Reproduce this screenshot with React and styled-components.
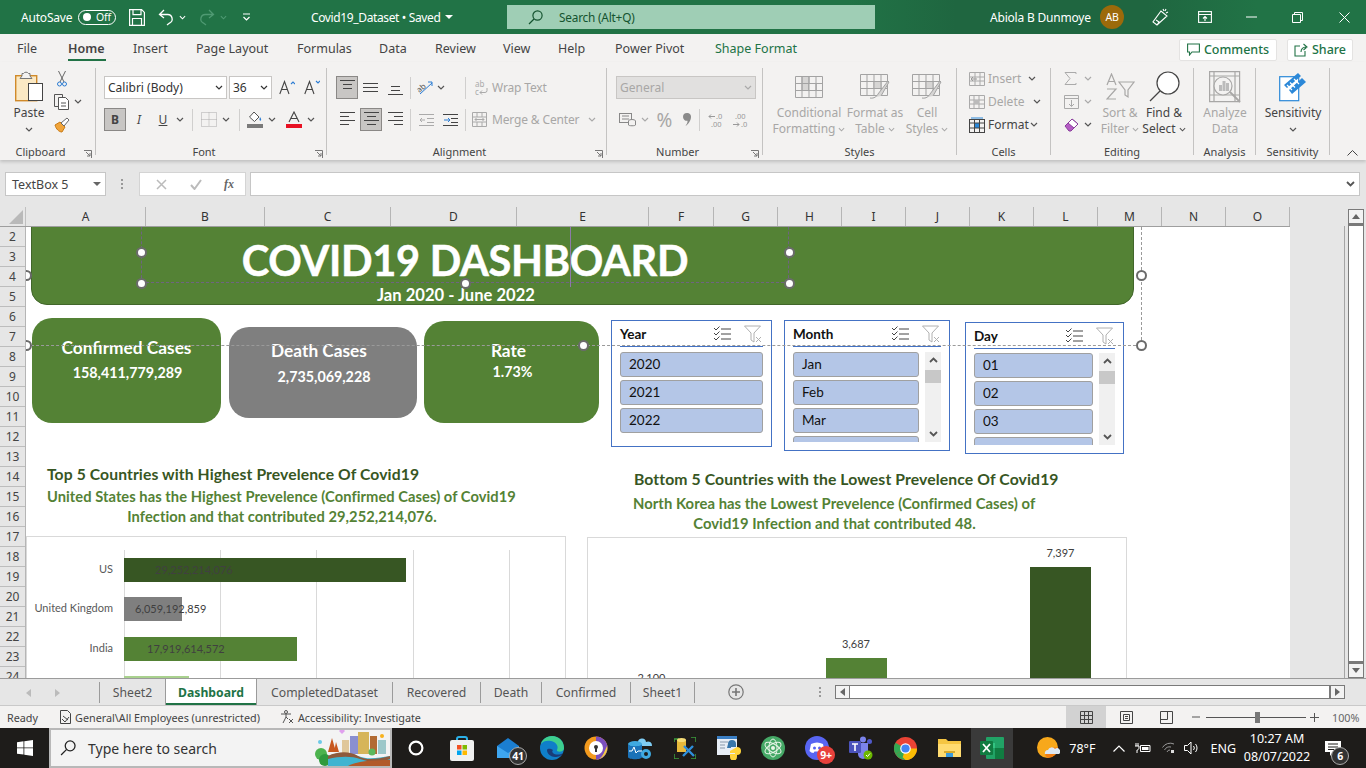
import React from "react";
import styled, { createGlobalStyle } from "styled-components";

const UI = `"Noto Sans", "Open Sans", "Liberation Sans", sans-serif`;
const CAL = `Lato, "Noto Sans", "Liberation Sans", sans-serif`;

const Global = createGlobalStyle`
  html, body { margin: 0; padding: 0; background: #e6e6e6; }
  body { font-family: ${UI}; overflow: hidden; }
  * { box-sizing: border-box; }
`;

const Page = styled.div`
  width: 1366px; height: 768px; display: flex; flex-direction: column; overflow: hidden;
  background: #e6e6e6; color: #444;
`;
const Svg = styled.svg`display: block; flex: none;`;

/* ----- title bar ----- */
const TitleBar = styled.header`
  height: 34px; flex: none; display: flex; align-items: center; padding-left: 21px; color: #fff;
  background: linear-gradient(90deg, #217346 0, #217346 62%, #1f6640 70%, #1f6640 84%, #217346 92%);
  font-size: 12px; letter-spacing: -.2px; white-space: nowrap;
`;
const Sp = styled.span`display: inline-flex; align-items: center; flex: none; margin-left: ${p => p.$ml || 0}px;`;
const FixedText = styled.span`width: ${p => p.$w}px; flex: none; margin-left: ${p => p.$ml || 0}px; letter-spacing: ${p => p.$ls ?? -0.2}px;`;
const Toggle = styled.span`
  width: 38px; height: 15px; border: 1px solid #fff; border-radius: 8px; display: flex; align-items: center;
  padding-left: 4px; gap: 5px; font-size: 10.5px; line-height: 1; flex: none;
  &::before { content: ""; width: 8px; height: 8px; border-radius: 50%; background: #fff; }
`;
const SearchBox = styled.div`
  margin-left: 54px; width: 368px; height: 24px; background: #9fceb5; color: #14532f; display: flex; align-items: center;
  padding-left: 21px; gap: 16px; font-size: 11.8px; flex: none;
`;
const Avatar = styled.span`
  margin-left: 10px; width: 24px; height: 24px; border-radius: 50%; background: #9c6a0b; display: flex; align-items: center; justify-content: center;
  font-size: 10.5px; color: #fff; flex: none;
`;

/* ----- tabs ----- */
const TabRow = styled.nav`
  height: 28px; flex: none; background: #f3f2f1; display: flex; align-items: center; padding-left: 17px; font-size: 12.5px; position: relative;
`;
const RTab = styled.span`
  width: ${p => p.$w}px; flex: none; white-space: nowrap; height: 28px; line-height: 30px; position: relative;
  color: ${p => (p.$shape ? "#217346" : "#444")};
  font-weight: ${p => (p.$active ? 600 : 400)};
  &::after { content: ""; display: ${p => (p.$active ? "block" : "none")}; position: absolute; left: 0; width: 38px; top: 25px; height: 2px; background: #217346; }
`;
const TabActions = styled.div`margin-left: auto; display: flex; gap: 10px; padding-right: 13px; padding-top: 3px;`;
const ActionBtn = styled.button`
  height: 22px; width: ${p => p.$w}px; background: #fff; border: 1px solid #e4e3e2; border-radius: 2px; display: flex; align-items: center; justify-content: center;
  gap: 4px; font: 500 12.5px ${UI}; color: #217346; padding: 0;
`;

/* ----- ribbon ----- */
const Ribbon = styled.section`
  height: 98px; flex: none; background: #f3f2f1; display: flex; padding-top: 6px; position: relative; box-shadow: 0 2px 3px rgba(0,0,0,.16);
`;
const Group = styled.div`
  width: ${p => p.$w}px; height: 87px; flex: none; display: flex; flex-direction: column; border-right: 1px solid #c4c3c2; position: relative;
`;
const GroupBody = styled.div`flex: 1; min-height: 0; display: flex; padding-left: ${p => p.$pl || 0}px;`;
const GroupLabel = styled.div`
  height: 14px; line-height: 14px; margin-bottom: -4px; padding-right: ${p => (p.$launch ? 14 : 0)}px; text-align: center; font-size: 11px; color: #444; white-space: nowrap;
`;
const Launcher = styled.span`position: absolute; right: 3px; bottom: -3px;`;
const Rows = styled.div`display: flex; flex-direction: column; gap: 9px; padding-top: 8px;`;
const Row = styled.div`display: flex; align-items: center; height: 23px;`;
const StackRows = styled.div`display: flex; flex-direction: column; margin-left: ${p => p.$ml || 0}px; margin-top: -1px;`;
const StackRow = styled.div`display: flex; align-items: center; height: 23px; font-size: 12px; color: ${p => (p.$dim ? "#a8a7a6" : "#444")}; white-space: nowrap;`;
const Slot = styled.span`
  width: ${p => p.$w}px; height: 23px; flex: none; display: inline-flex; align-items: center; justify-content: center; margin-left: ${p => p.$ml || 0}px;
  background: ${p => (p.$on ? "#c8c6c4" : "transparent")}; border: ${p => (p.$on ? "1px solid #8a8886" : "0")}; font-size: 12px;
`;
const VSep = styled.span`width: 1px; height: 22px; background: #d0cfce; flex: none; margin: 0 ${p => p.$r ?? p.$m ?? 0}px 0 ${p => p.$m || 0}px;`;
const Combo = styled.span`
  width: ${p => p.$w}px; height: 23px; flex: none; background: ${p => (p.$dim ? "#e1e0df" : "#fff")}; border: 1px solid #c8c6c4; display: flex; align-items: center; justify-content: space-between;
  padding: 0 3px 0 3px; font-size: 12px; color: ${p => (p.$dim ? "#a8a7a6" : "#333")}; margin-left: ${p => p.$ml || 0}px; white-space: nowrap;
`;
const DimText = styled.span`font-size: 12px; letter-spacing: -.15px; color: #a8a7a6; white-space: nowrap; margin-left: ${p => p.$ml || 0}px;`;
const PercentGlyph = styled.span`font-size: 19px; color: #a8a7a6;`;
const OrientBox = styled.span`display: flex; align-items: center; position: relative; width: 16px; height: 16px; flex: none;`;
const OrientText = styled.span`display: block; font-size: 8px; line-height: 9px; color: #555; transform: rotate(-40deg); transform-origin: 4px 6px;`;
const OrientArrow = styled.span`position: absolute; left: 1px; top: 1px;`;
const WrapBox = styled.span`display: flex; flex-direction: column; width: 14px; height: 16px; flex: none; font-size: 8px; line-height: 8px; color: #aaa;`;
const WrapLine = styled.span`display: flex; align-items: center; gap: 0;`;
const BigTool = styled.div`
  width: ${p => p.$w}px; flex: none; display: flex; flex-direction: column; align-items: center; margin-left: ${p => p.$ml || 0}px;
  color: ${p => (p.$dim ? "#a8a7a6" : "#444")}; font-size: 12px; line-height: 16px; text-align: center; white-space: nowrap;
`;
const BigIcon = styled.div`height: 37px; display: flex; align-items: center; justify-content: center; align-self: stretch;`;
const TextLine = styled.div`display: flex; align-items: center; justify-content: center; gap: 3px; height: 16px;`;
const Collapse = styled.span`position: absolute; right: 8px; bottom: 4px;`;

/* ----- formula ----- */
const FormulaArea = styled.div`height: 47px; flex: none; display: flex; padding: 12px 6px 0 5px; align-items: flex-start;`;
const NameBox = styled.div`
  width: 101px; height: 24px; background: #fff; border: 1px solid #c6c6c6; display: flex; align-items: center; justify-content: space-between; padding: 0 4px 0 6px; font-size: 12.5px; color: #444;
`;
const GripDots = styled.span`width: 33px; height: 24px; display: flex; align-items: center; justify-content: center;`;
const FxBox = styled.div`
  width: 107px; height: 24px; background: #fff; border: 1px solid #d4d4d4; display: flex; align-items: center; justify-content: space-between; padding: 0 11px 0 16px; color: #aaa;
`;
const FxText = styled.i`font: italic 700 12px "Liberation Serif", serif; color: #666;`;
const FormulaInput = styled.div`
  margin-left: 4px; flex: 1; height: 24px; background: #fff; border: 1px solid #c6c6c6; display: flex; align-items: center; justify-content: flex-end; padding-right: 4px;
`;

/* ----- sheet ----- */
const SheetArea = styled.div`height: 471px; flex: none; display: flex; position: relative;`;
const SheetMain = styled.div`width: 1290px; flex: none; display: flex; flex-direction: column;`;
const ColHeaders = styled.div`height: 20px; flex: none; display: flex; border-bottom: 1px solid #9e9e9e;`;
const Corner = styled.div`width: 26px; flex: none; display: flex; align-items: flex-end; padding: 0 0 2px 9px; border-right: 1px solid #c0c0c0;`;
const ColHead = styled.div`
  width: ${p => p.$w}px; flex: none; text-align: center; font-size: 12px; line-height: 20px; color: #333; border-right: 1px solid #b5b5b5;
`;
const SheetBody = styled.div`flex: 1; display: flex; min-height: 0;`;
const RowHeads = styled.div`width: 26px; flex: none; overflow: hidden; background: #e6e6e6; border-right: 1px solid #b5b5b5;`;
const RowHead = styled.div`height: 20px; text-align: center; font-size: 12px; line-height: 19px; color: #444; border-bottom: 1px solid #bdbdbd;`;
const Canvas = styled.div`flex: 1; position: relative; background: #fff; overflow: hidden; font-family: ${CAL};`;

const at = (x, y) => `left: ${x - 26}px; top: ${y - 227}px;`;
const Banner = styled.div`
  position: absolute; ${at(31, 217)} width: 1103px; height: 88px; background: #548235; border: 1px solid #41662a; border-radius: 0 0 16px 16px;
`;
const TitleBox = styled.div`
  position: absolute; ${at(141, 217)} width: 648px; height: 66px; border: 1px dashed #6e6480; display: flex; align-items: center; justify-content: center; padding-top: 22px;
  color: #fff; font-weight: 700; font-size: 41.5px; letter-spacing: -.3px; white-space: nowrap; line-height: 1; -webkit-text-stroke: .5px #fff;
`;
const TextSeam = styled.div`position: absolute; ${at(570, 227)} width: 1px; height: 60px; background: #8d7aa8;`;
const SubTitle = styled.div`
  position: absolute; ${at(356, 285)} width: 200px; text-align: center; color: #fff; font-weight: 700; font-size: 16.6px; line-height: 20px; white-space: nowrap;
`;
const Kpi = styled.div`
  position: absolute; left: ${p => p.$x - 26}px; top: ${p => p.$y - 227}px; width: ${p => p.$w}px; height: ${p => p.$h}px;
  background: ${p => p.$bg}; border-radius: 20px; color: #fff; text-align: center; font-weight: 700;
`;
const KpiTitle = styled.div`
  position: absolute; left: 0; right: 0; top: ${p => p.$t}px; transform: translateX(${p => p.$dx || 0}px); font-size: 17.3px; line-height: 22px; white-space: nowrap;
`;
const KpiValue = styled.div`
  position: absolute; left: 0; right: 0; top: ${p => p.$t}px; transform: translateX(${p => p.$dx || 0}px); font-size: 14.3px; line-height: 18px; white-space: nowrap;
`;
const DotH = styled.div`position: absolute; ${at(26, 345)} width: 1115px; border-top: 1px dashed #9a9a9a;`;
const DotV = styled.div`position: absolute; ${at(1141, 227)} height: 118px; border-left: 1px dashed #9a9a9a;`;
const Handle = styled.span`
  position: absolute; left: ${p => p.$x - 26 - 5.5}px; top: ${p => p.$y - 227 - 5.5}px; width: 11px; height: 11px; border-radius: 50%;
  background: #fff; border: 2px solid #6b6b6b;
`;

const Slicer = styled.div`
  position: absolute; left: ${p => p.$x - 26}px; top: ${p => p.$y - 227}px; width: ${p => p.$w}px; height: ${p => p.$h}px; background: #fff; border: 1px solid #4472c4;
  padding: 0 8px; font-family: ${CAL};
`;
const SlicerHead = styled.div`
  height: 26px; display: flex; align-items: center; border-bottom: 1px solid #4472c4; font-weight: 700; font-size: 13.5px; color: #111; padding-right: 1px;
`;
const SlicerName = styled.span`flex: 1;`;
const SlicerBody = styled.div`display: flex; gap: 6px; margin-top: ${p => p.$mt}px; height: ${p => p.$h}px; overflow: hidden;`;
const SlicerItems = styled.div`flex: 1; display: flex; flex-direction: column; gap: 3px; min-width: 0;`;
const SlicerItem = styled.div`
  height: 25px; flex: none; background: #b4c6e7; border: 1px solid #a0a0a0; border-radius: 3px; padding-left: 8px; font-size: 13.5px; line-height: 23px; color: #111;
`;
const SlicerBar = styled.div`
  width: 16px; flex: none; background: #f0f0f0; display: flex; flex-direction: column; align-items: center; justify-content: space-between; padding: 5px 0;
`;
const SlicerThumb = styled.div`position: absolute; width: 16px; height: 13px; background: #c8c8c8; margin-top: 13px;`;
const BarWrap = styled.div`position: relative; display: flex; flex-direction: column; align-items: center; justify-content: space-between; height: 100%; width: 100%;`;

const Heading = styled.div`
  position: absolute; left: ${p => p.$x - 26}px; top: ${p => p.$y - 227}px; width: ${p => p.$w}px; font-weight: 700; white-space: nowrap;
  font-size: ${p => p.$fs}px; letter-spacing: ${p => p.$ls || 0}px; color: ${p => p.$c}; line-height: 20px; text-align: ${p => p.$ta || "left"};
`;

const BarChart = styled.div`
  position: absolute; ${at(26, 536)} width: 540px; height: 180px; background: #fff; border: 1px solid #d9d9d9; padding: 21px 0 0 0; display: flex; flex-direction: column; gap: 15.4px;
`;
const GridLine = styled.span`position: absolute; left: ${p => p.$x - 27}px; top: 13px; bottom: 0; width: 1px; background: #d9d9d9;`;
const BarRow = styled.div`display: flex; align-items: center; height: 24px; position: relative;`;
const BarLabel = styled.span`width: 86px; text-align: right; font-size: 11px; color: #595959; white-space: nowrap; font-family: ${CAL}; margin: -3px 11px 0 0; flex: none;`;
const HBar = styled.div`height: 24px; background: ${p => p.$c}; display: flex; align-items: center; flex: none; position: relative; z-index: 1;`;
const HBarValue = styled.span`padding-left: ${p => p.$pl}px; margin-top: -1px; font-size: 11px; color: #404040; white-space: nowrap;`;

const ColChart = styled.div`
  position: absolute; ${at(587, 537)} width: 540px; height: 220px; background: #fff; border: 1px solid #d9d9d9; display: flex; align-items: flex-end; padding-left: 33px; gap: 143.5px;
`;
const ColItem = styled.div`width: 61px; display: flex; flex-direction: column; align-items: center; flex: none;`;
const ColValue = styled.span`font-size: 11px; color: #404040; line-height: 14px; margin-bottom: 7px; white-space: nowrap;`;
const ColBar = styled.div`width: 100%; background: ${p => p.$c};`;

const Gutter = styled.div`flex: 1; position: relative; background: #e6e6e6;`;
const GutterRule = styled.span`position: absolute; left: 54px; top: 19px; bottom: 0; width: 1px; background: #a5a5a5;`;
const VScroll = styled.div`position: absolute; left: 58px; top: 2px; bottom: 0; width: 16px; display: flex; flex-direction: column;`;
const VBtn = styled.div`height: 15px; flex: none; background: #f3f3f3; border: 1px solid #7a7a7a; display: flex; align-items: center; justify-content: center;`;
const VThumb = styled.div`flex: 1; background: #fff; border: 1px solid #7a7a7a; border-top: 2px solid #7a7a7a; border-bottom-width: 2px;`;

/* ----- sheet tabs ----- */
const TabBar = styled.div`
  height: 28px; flex: none; background: #e6e6e6; border-top: 1px solid #9b9b9b; border-bottom: 1px solid #c9c9c9; display: flex; align-items: stretch; font-size: 12.2px; color: #555; position: relative;
`;
const NavArrows = styled.div`width: 100px; flex: none; display: flex; align-items: center; padding-left: 26px; gap: 24px; border-right: 1px solid #9b9b9b; margin: 3px 0 2px;`;
const SheetTab = styled.div`
  width: ${p => p.$w}px; flex: none; display: flex; align-items: center; justify-content: center; white-space: nowrap;
  ${p => p.$active
    ? `background:#fff;color:#217346;font-weight:700;border:1px solid #9b9b9b;border-bottom:0;margin-top:-1px;box-shadow:inset 0 -2px 0 #217346;`
    : `margin:3px 0 2px;border-right:${p.$noline ? "0" : "1px solid #9b9b9b"};`}
`;
const AddSheet = styled.span`margin-left: 33px; display: flex; align-items: center;`;
const TabDots = styled.span`margin-left: 75px; display: flex; align-items: center;`;
const HScroll = styled.div`margin-left: 13px; display: flex; align-items: center; width: 510px;`;
const HBtn = styled.div`width: 15px; height: 14px; flex: none; background: #f3f3f3; border: 1px solid #7a7a7a; display: flex; align-items: center; justify-content: center;`;
const HThumb = styled.div`width: 480px; height: 14px; background: #fff; border: 1px solid #7a7a7a; border-left-width: 0;`;

/* ----- status ----- */
const StatusBar = styled.div`
  height: 22px; flex: none; background: #f3f2f1; display: flex; align-items: center; padding-left: 7px; font-size: 10.8px; color: #444; white-space: nowrap;
`;
const StatusItem = styled.span`display: flex; align-items: center; gap: 4px; margin-left: ${p => p.$ml || 0}px;`;
const ViewBtn = styled.span`width: 40px; height: 22px; display: flex; align-items: center; justify-content: center; background: ${p => (p.$on ? "#d2d2d2" : "transparent")}; flex: none;`;
const Zoom = styled.div`margin-left: auto; display: flex; align-items: center; height: 22px;`;
const ZoomTrack = styled.span`width: 100px; height: 1px; background: #555; position: relative; margin: 0 4px 0 6px; flex: none;
  &::after { content: ""; position: absolute; left: 49px; top: -5px; width: 5px; height: 11px; background: #777; }`;
const ZoomPct = styled.span`margin: 0 7px 0 13px; color: #666; width: 27px;`;

/* ----- taskbar ----- */
const Taskbar = styled.footer`height: 40px; flex: none; background: #1e1c1a; display: flex; align-items: center; color: #fff; position: relative;`;
const StartBtn = styled.div`width: 49px; height: 40px; display: flex; align-items: center; justify-content: center; flex: none;`;
const TaskSearch = styled.div`
  width: 343px; height: 40px; flex: none; background: #f3f3f3; border: 2px solid #b8b8b8; display: flex; align-items: center; padding-left: 9px; gap: 12px;
  color: #333; font-size: 14px; position: relative; overflow: hidden;
`;
const SearchArt = styled.span`position: absolute; right: 0; bottom: 0;`;
const Apps = styled.div`display: flex; margin-left: 2px;`;
const AppSlot = styled.div`
  width: ${p => p.$w || 44}px; height: 40px; flex: none; display: flex; align-items: center; justify-content: center; position: relative;
  background: ${p => (p.$on ? "#3a3a3a" : "transparent")};
`;
const Badge = styled.span`
  position: absolute; right: ${p => p.$r}px; bottom: ${p => p.$b}px; min-width: 18px; height: 18px; border-radius: 50%; background: ${p => p.$bg || "#333"}; border: ${p => (p.$bg ? "0" : "1px solid #aaa")};
  font-size: 10.5px; font-weight: 700; display: flex; align-items: center; justify-content: center; color: #fff; letter-spacing: -.3px;
`;
const Tray = styled.div`margin-left: auto; display: flex; align-items: center; height: 40px; font-size: 12.5px; padding-right: 25px;`;
const TrayItem = styled.span`margin-left: ${p => p.$ml || 0}px; display: flex; align-items: center; flex: none; position: relative;`;
const Clock = styled.div`width: 82px; text-align: center; font-size: 12.5px; line-height: 18px; flex: none;`;

/* ----- icons ----- */
const Chev = ({ c = "#555", w = 8, dim }) => (
  <Svg width={w} height="5" viewBox="0 0 8 5"><path d="M1 1l3 3 3-3" fill="none" stroke={dim ? "#aaa" : c} strokeWidth="1.2" /></Svg>
);
const Caret = ({ c = "#666" }) => <Svg width="8" height="4" viewBox="0 0 8 4"><path d="M0 0h8L4 4z" fill={c} /></Svg>;
const Launch = () => (
  <Svg width="8" height="8" viewBox="0 0 8 8"><path d="M0 .5h7.5V8M2 2l4 4M3 6h3V3" fill="none" stroke="#777" strokeWidth="1" /></Svg>
);
const SaveI = () => (
  <Svg width="16" height="17" viewBox="0 0 16 17" fill="none" stroke="#fff" strokeWidth="1.2"><path d="M.6.6h12l2.8 2.8v13H.6zM4 .6v5h8v-5M3.5 16.4V9.5h9v6.9" /></Svg>
);
const UndoI = ({ c = "#fff" }) => (
  <Svg width="16" height="17" viewBox="0 0 16 17" fill="none" stroke={c} strokeWidth="1.3"><path d="M6 1L1.5 5.5 6 9M2 5.5h7.5a4.5 4.5 0 0 1 2 8.6L9 16" /></Svg>
);
const RedoI = ({ c = "#4f9a73" }) => (
  <Svg width="16" height="17" viewBox="0 0 16 17" fill="none" stroke={c} strokeWidth="1.3"><path d="M10 1l4.5 4.5L10 9M14 5.5H6.5a4.5 4.5 0 0 0-2 8.6L7 16" /></Svg>
);
const CustomI = () => <Svg width="9" height="9" viewBox="0 0 9 9" fill="none" stroke="#fff" strokeWidth="1.2"><path d="M1 1h7M1.5 4l3 3 3-3" /></Svg>;
const SearchI = ({ c = "#14532f", s = 15 }) => <Svg width={s} height={s} viewBox="0 0 15 15" fill="none" stroke={c} strokeWidth="1.2"><circle cx="9.5" cy="5.5" r="4.6" /><path d="M6 9L1 14" /></Svg>;
const PenI = () => <Svg width="17" height="19" viewBox="0 0 17 19" fill="none" stroke="#fff" strokeWidth="1.1"><path d="M5 17L1 14 9 3l6 5zM5 17l2-3 -3-2M11 1l1 2M14 1l-1 2M16 4l-2 1" /></Svg>;
const RibbonModeI = () => <Svg width="14" height="12" viewBox="0 0 14 12" fill="none" stroke="#fff" strokeWidth="1.1"><rect x=".6" y=".6" width="12.8" height="10.8" /><path d="M.6 3.5h12.8M7 10V5.5M5 7.5l2-2 2 2" /></Svg>;
const WinMin = () => <Svg width="11" height="2" viewBox="0 0 11 2"><path d="M0 1h11" stroke="#fff" /></Svg>;
const WinMax = () => <Svg width="11" height="11" viewBox="0 0 11 11" fill="none" stroke="#fff"><path d="M.5 2.5h8v8h-8zM2.5 2.5v-2h8v8h-2" /></Svg>;
const WinX = () => <Svg width="11" height="11" viewBox="0 0 11 11" stroke="#fff"><path d="M.5.5l10 10M10.5.5l-10 10" /></Svg>;
const CommentI = () => <Svg width="13" height="13" viewBox="0 0 13 13" fill="none" stroke="#217346" strokeWidth="1.1"><path d="M.6 1h11.8v8H5L2.5 12V9H.6z" /></Svg>;
const ShareI = () => <Svg width="14" height="14" viewBox="0 0 14 14" fill="none" stroke="#217346" strokeWidth="1.1"><path d="M6 3H1v10h10V8M7 9c0-3 2-5 5-5M9.5 1L13 4l-3.5 3" /></Svg>;

const PasteI = () => (
  <Svg width="28" height="31" viewBox="0 0 28 31">
    <rect x=".7" y="4.7" width="21" height="25" fill="#fbe9c4" stroke="#d08a2a" strokeWidth="1.4" />
    <path d="M7 5V2.5h1.5a3 3 0 0 1 5 0H15V5l2 2.5H5z" fill="#f3f2f1" stroke="#777" />
    <rect x="13.5" y="12.5" width="14" height="17" fill="#fff" stroke="#444" />
  </Svg>
);
const ScissorsI = () => <Svg width="10" height="17" viewBox="0 0 10 17" fill="none"><path d="M1.5 1l5.5 11M8.5 1L3 12" stroke="#666" /><circle cx="2.5" cy="14" r="2" stroke="#2b7cd3" /><circle cx="7.5" cy="14" r="2" stroke="#2b7cd3" /></Svg>;
const CopyI = () => <Svg width="16" height="16" viewBox="0 0 16 16" fill="#fff" stroke="#555"><path d="M.5.5h8v12h-8z" fill="none" /><path d="M4.5 3.5h7l3 3v9h-10z" /><path d="M7 9h5M7 12h5" /></Svg>;
const BrushI = () => <Svg width="17" height="17" viewBox="0 0 17 17"><path d="M1 9l5-3 5 5-3 5c-3 0-6-3-7-7z" fill="#f0a43a" stroke="#c97a14" /><path d="M7 7l6-5 2 2-5 6z" fill="#fff" stroke="#666" /></Svg>;
const BigA = ({ up }) => (
  <Svg width="16" height="15" viewBox="0 0 16 15" fill="none" stroke="#444" strokeWidth="1.1">
    <path d="M.8 14L5.5 1.5 10 14M2.5 9.5h6" />
    <path d={up ? "M12 4l2-2 2 2" : "M12 1l2 2 2-2"} stroke="#2b7cd3" />
  </Svg>
);
const GridDots = () => <Svg width="16" height="15" viewBox="0 0 16 15" fill="none" stroke="#aaa" strokeDasharray="1 1"><path d="M.5.5h15v14H.5zM8 .5v14M.5 7.5h15" /></Svg>;
const FillI = () => <Svg width="16" height="17" viewBox="0 0 16 17"><path d="M7 1l5 5-4.5 4.5L2.5 6z" fill="#fff" stroke="#555" /><path d="M13 6c1 1.5 1.5 2.5 1 3.5-.8.5-1.8-.3-1.5-1.5z" fill="#2b7cd3" /><rect y="13" width="16" height="4" fill="#7a7a7a" /></Svg>;
const FontColI = () => <Svg width="16" height="17" viewBox="0 0 16 17" fill="none" stroke="#444" strokeWidth="1.1"><path d="M3 11l5-10 5 10M4.6 7.5h6.8" /><rect y="13" width="16" height="4" fill="#e81123" stroke="none" /></Svg>;
const AlignI = ({ t }) => {
  const paths = {
    vtop: "M0 .5h15M3 4.5h9M3 8.5h9",
    vmid: "M0 3.5h15M0 7.5h15M0 11.5h15",
    vbot: "M3 6.5h9M3 10.5h9M0 14.5h15",
    left: "M0 .5h15M0 4.5h9M0 8.5h15M0 12.5h9",
    center: "M0 .5h15M3 4.5h9M0 8.5h15M3 12.5h9",
    right: "M0 .5h15M6 4.5h9M0 8.5h15M6 12.5h9",
  };
  return <Svg width="15" height="15" viewBox="0 0 15 15" fill="none" stroke="#444"><path d={paths[t]} /></Svg>;
};
const OrientI = () => (
  <OrientBox>
    <OrientText>ab</OrientText>
    <OrientArrow><Svg width="15" height="14" viewBox="0 0 15 14" fill="none" stroke="#2b7cd3"><path d="M2 13L14 2M10 1h4v4" /></Svg></OrientArrow>
  </OrientBox>
);
const Outdent = ({ c, a }) => <Svg width="15" height="12" viewBox="0 0 15 12" fill="none" stroke={c}><path d="M0 .5h15M8 4.5h7M8 8.5h7M0 11.5h15" /><path d={a} stroke={a.includes("M1 6h6") ? "#2b7cd3" : "#aaa"} /></Svg>;
const WrapI = () => (
  <WrapBox>
    <WrapLine>ab</WrapLine>
    <WrapLine>c<Svg width="9" height="8" viewBox="0 0 9 8" fill="none" stroke="#aaa"><path d="M8 0v2.500a2 2 0 0 1-2 2H1M3 2.500L1 4.500l2 2" /></Svg></WrapLine>
  </WrapBox>
);
const MergeI = () => <Svg width="15" height="15" viewBox="0 0 15 15" fill="none" stroke="#aaa"><path d="M.5.5h14v14H.5zM.5 5h14M.5 10h14M5 .5V5M5 10v4.5M10 .5V5M10 10v4.5M3 7.5h9M4.500 6L3 7.5 4.500 9M10.500 6L12 7.5 10.500 9" /></Svg>;
const AcctI = () => <Svg width="17" height="14" viewBox="0 0 17 14" fill="none" stroke="#888"><rect x=".5" y=".5" width="12" height="9" /><path d="M3 3h7M3 6h7" /><ellipse cx="13" cy="8" rx="3.500" ry="1.500" fill="#f3f2f1" /><path d="M9.500 8v4c0 1 7 1 7 0V8" fill="#f3f2f1" /></Svg>;
const CommaI = () => <Svg width="8" height="13" viewBox="0 0 8 13"><path d="M4 0a3.800 3.800 0 0 1 4 4c0 3.500-2.500 7-5.500 9 1.500-2 2.200-3.500 2-5.200A3.900 3.900 0 0 1 0 4a4 4 0 0 1 4-4z" fill="#8a8a8a" /></Svg>;
const Decimal = ({ a, b, flip }) => (
  <Svg width="17" height="16" viewBox="0 0 17 16" fill="none" stroke="#999">
    <path d={flip ? "M1 12.500h6M5 10.500l2 2-2 2" : "M1 4.500h6M3 2.500l-2 2 2 2"} />
    <text x={flip ? 3 : 8} y="7" fontSize="7.500" fill="#999" stroke="none" fontFamily="Noto Sans">{a}</text>
    <text x={flip ? 9 : 3} y="15" fontSize="7.500" fill="#999" stroke="none" fontFamily="Noto Sans">{b}</text>
  </Svg>
);
const CondI = () => <Svg width="28" height="22" viewBox="0 0 28 22" fill="#d6d5d4" stroke="#a3a3a3"><path d="M.5.5h27v21H.5z" fill="none" /><path d="M7 .5h7v7H7zM7 7.5h7v7H7zM14 7.5h7v7h-7z" /><rect x="14" y="7.500" width="7" height="7" fill="#f3f2f1" /><path d="M.5 7.500h27M.5 14.500h27M7 .5v21M21 .5v21M14 .5v7M14 14.500v7" fill="none" /></Svg>;
const TableI = () => <Svg width="30" height="25" viewBox="0 0 30 25" fill="none" stroke="#a3a3a3"><path d="M.5.5h27v21H.5zM.5 7.500h27M.5 14.500h27M7 .5v21M14 .5v21M21 .5v21" /><path d="M14 7.500h7v7h-7z" fill="#d6d5d4" /><path d="M10 24c4 1 7-2 8-4l10-13 1 1-8 14" fill="#d6d5d4" stroke="#a3a3a3" /></Svg>;
const CellSideI = ({ k }) => {
  const p = {
    ins: "M.5 1.500h15v13H.5zM6 1.500v13M11 1.500v13M.5 6h15M.5 10h15",
    del: "M.5 1.500h15v13H.5zM5 1.500v13M10 1.500v13M.5 6h15M.5 10h15",
  }[k];
  return (
    <Svg width="16" height="16" viewBox="0 0 16 16" fill="none" stroke="#aaa">
      <path d={p} />
      {k === "ins" ? <path d="M8 8H2M4 6L2 8l2 2" stroke="#999" /> : <rect x="5" y="6" width="5" height="4" fill="#bbb" stroke="none" />}
    </Svg>
  );
};
const FormatI = () => <Svg width="16" height="16" viewBox="0 0 16 16"><rect x=".5" y="2.500" width="15" height="13" fill="none" stroke="#444" /><rect x="5.500" y="6" width="5" height="5" fill="#2b88d8" /><path d="M.5 6h15M.5 11h15M5.500 2.500v13M10.500 2.500v13" stroke="#444" /><path d="M2 1h12" stroke="#2b88d8" /></Svg>;
const SigmaI = () => <Svg width="13" height="13" viewBox="0 0 13 13" fill="none" stroke="#aaa"><path d="M12 2V.5H1l5 6-5 6h11V11" /></Svg>;
const FillDownI = () => <Svg width="15" height="14" viewBox="0 0 15 14" fill="none" stroke="#aaa"><path d="M.5.5h14v13H.5zM.5 3.500h14M7.500 5v6M5 9l2.500 2.500L10 9" /></Svg>;
const EraseI = () => <Svg width="15" height="15" viewBox="0 0 15 15"><path d="M1 9l7-7 6 5-7 7H5z" fill="#b55cc4" stroke="#8a3e9c" /><path d="M8 2l6 5-4 4-6-5z" fill="#fff" stroke="#8a3e9c" /></Svg>;
const SortI = () => <Svg width="29" height="27" viewBox="0 0 29 27" fill="none" stroke="#a8a7a6" strokeWidth="1.2"><path d="M1 12L5.500 1 10 12M2.500 8.500h6M1 16h9L1 26h9" /><path d="M13 9h15l-6 8v7l-3-2v-5z" /></Svg>;
const FindI = () => <Svg width="31" height="31" viewBox="0 0 31 31" fill="none" stroke="#444" strokeWidth="1.2"><circle cx="19" cy="12" r="11" fill="#fff" /><path d="M11 20L1 30" /></Svg>;
const AnalyzeI = () => (
  <Svg width="32" height="32" viewBox="0 0 32 32" fill="none" stroke="#a8a7a6" strokeWidth="1.2">
    <path d="M.6.6h30v30H.6zM.6 5h30M.6 24h30M5 .6v30M26 .6v30" />
    <circle cx="14" cy="15" r="9" fill="#f3f2f1" />
    <path d="M21 21l10 10" strokeWidth="1.8" />
    <rect x="10" y="14" width="3" height="6" fill="#bbb" stroke="none" /><rect x="13.500" y="10" width="3" height="10" fill="#bbb" stroke="none" /><rect x="17" y="12" width="3" height="8" fill="#bbb" stroke="none" />
  </Svg>
);
const SensI = () => (
  <Svg width="28" height="31" viewBox="0 0 28 31">
    <rect x=".7" y="5.700" width="19" height="24" fill="#fff" stroke="#2b88d8" strokeWidth="1.2" />
    <path d="M5 14L19 2l3 3-14 12zM10 19L23 7l4 4-14 12z" fill="#2b88d8" />
    <path d="M8 14l5 5M11 11.500l5 5M15 8l5 5" stroke="#fff" strokeWidth="1.2" />
  </Svg>
);
const TriangleCorner = () => <Svg width="14" height="14" viewBox="0 0 14 14"><path d="M14 0v14H0z" fill="#b9b9b9" /></Svg>;
const UpTri = ({ c = "#666" }) => <Svg width="8" height="5" viewBox="0 0 8 5"><path d="M4 0l4 5H0z" fill={c} /></Svg>;
const DownTri = ({ c = "#666" }) => <Svg width="8" height="5" viewBox="0 0 8 5"><path d="M0 0h8L4 5z" fill={c} /></Svg>;
const LeftTri = ({ c = "#666" }) => <Svg width="5" height="8" viewBox="0 0 5 8"><path d="M5 0v8L0 4z" fill={c} /></Svg>;
const RightTri = ({ c = "#666" }) => <Svg width="5" height="8" viewBox="0 0 5 8"><path d="M0 0v8l5-4z" fill={c} /></Svg>;
const MultiI = () => <Svg width="18" height="16" viewBox="0 0 18 16" fill="none" stroke="#444"><path d="M8 3h10M8 8h10M8 13h10" /><path d="M1 2l2 2 3.500-3.500M1 7l2 2 3.500-3.500M1 12l2 2 3.500-3.500" /></Svg>;
const ClearI = () => <Svg width="18" height="18" viewBox="0 0 18 18" fill="none" stroke="#b0b0b0"><path d="M.5 1h16L10 8v9l-3-2V8z" /><path d="M12 12l5 5M17 12l-5 5" /></Svg>;
const ChevUp = () => <Svg width="9" height="6" viewBox="0 0 9 6" fill="none" stroke="#555" strokeWidth="1.8"><path d="M1 5l3.500-3.500L8 5" /></Svg>;
const ChevDown = () => <Svg width="9" height="6" viewBox="0 0 9 6" fill="none" stroke="#555" strokeWidth="1.8"><path d="M1 1l3.500 3.500L8 1" /></Svg>;
const PlusCircle = () => <Svg width="16" height="16" viewBox="0 0 16 16" fill="none" stroke="#777" strokeWidth="1.2"><circle cx="8" cy="8" r="7.2" /><path d="M8 4v8M4 8h8" strokeWidth="1.6" /></Svg>;
const VDots = () => <Svg width="3" height="11" viewBox="0 0 3 11" fill="#999"><rect y="0" width="2" height="2" /><rect y="4" width="2" height="2" /><rect y="8" width="2" height="2" /></Svg>;
const DocTag = () => <Svg width="11" height="14" viewBox="0 0 11 14" fill="none" stroke="#444"><path d="M.5.5h7l3 3v10H.5z" /><path d="M2 9l3 3 4-5M3 6l5 4" /></Svg>;
const AccessI = () => <Svg width="14" height="14" viewBox="0 0 14 14" fill="none" stroke="#555"><circle cx="6" cy="2" r="1.500" /><path d="M1 4h10M6 4v3L3 13M6 7l2 2M9 9l4 4M13 9l-4 4" /></Svg>;
const NormalI = () => <Svg width="13" height="13" viewBox="0 0 13 13" fill="none" stroke="#444"><path d="M.5.5h12v12H.5zM4.500.5v12M8.500.5v12M.5 4.500h12M.5 8.500h12" /></Svg>;
const LayoutI = () => <Svg width="13" height="13" viewBox="0 0 13 13" fill="none" stroke="#444"><path d="M.5.5h12v12H.5zM3.500 3.500h6v6h-6zM5 5.500h3M5 7.500h3" /></Svg>;
const BreakI = () => <Svg width="13" height="13" viewBox="0 0 13 13" fill="none" stroke="#444"><path d="M.5.5h12v12H.5zM.5 8.500h7V.5" /></Svg>;

const WinLogo = () => <Svg width="16" height="16" viewBox="0 0 16 16" fill="#fff"><path d="M0 2.200L6.500 1.300v6.200H0zM7.300 1.200L16 0v7.500H7.300zM0 8.300h6.500v6.300L0 13.700zM7.300 8.300H16V16l-8.700-1.200z" /></Svg>;
const CityArt = () => (
  <Svg width="76" height="38" viewBox="0 0 76 38">
    <path d="M28 0l3 3-3 3-3-3z" fill="#e0a0ee" />
    <circle cx="6" cy="14" r="2" fill="#6cc9e8" />
    <circle cx="68" cy="8" r="2" fill="#f8b21d" />
    <path d="M14 24l4-14 4 14zM20 24l2-10 3 10z" fill="#c8571e" />
    <rect x="28" y="12" width="7" height="14" fill="#e0c79a" /><rect x="36" y="8" width="8" height="18" fill="#8a8fd0" /><rect x="44" y="4" width="11" height="22" fill="#d6b55a" /><rect x="56" y="8" width="7" height="18" fill="#b26b34" /><rect x="64" y="12" width="8" height="14" fill="#9cc7c9" />
    <circle cx="7" cy="26" r="6" fill="#4cb34e" /><circle cx="11" cy="32" r="6" fill="#2f9a3d" /><circle cx="58" cy="24" r="3.500" fill="#5cb85c" />
    <path d="M14 38V28c10-4 20-4 30 0s20 2 32 0v10z" fill="#3fb4d0" />
    <path d="M14 28c10-5 22-5 30 0s20 3 32 0v3c-10 4-22 3-30 0s-20-3-32 0z" fill="#8e5a3c" />
    <path d="M34 38c8-5 26-6 42-6v6z" fill="#b25a2a" />
  </Svg>
);
const CortanaI = () => <Svg width="16" height="16" viewBox="0 0 16 16" fill="none" stroke="#fff" strokeWidth="2.2"><circle cx="8" cy="8" r="6.4" /></Svg>;
const StoreI = () => (
  <Svg width="24" height="25" viewBox="0 0 24 25">
    <path d="M7 5V3a2 2 0 0 1 2-2h6a2 2 0 0 1 2 2v2" fill="none" stroke="#2bb0e8" strokeWidth="2" />
    <rect y="4" width="24" height="21" rx="2" fill="#f0f0f0" />
    <rect x="7" y="9" width="4.500" height="4.500" fill="#f25022" /><rect x="12.500" y="9" width="4.500" height="4.500" fill="#7fba00" /><rect x="7" y="14.500" width="4.500" height="4.500" fill="#00a4ef" /><rect x="12.500" y="14.500" width="4.500" height="4.500" fill="#ffb900" />
  </Svg>
);
const MailI = () => <Svg width="22" height="22" viewBox="0 0 22 22"><path d="M11 1l11 8v12H0V9z" fill="#1b7ed1" /><path d="M0 9l11 7 11-7v12H0z" fill="#3ea6f0" /></Svg>;
const EdgeI = () => (
  <Svg width="24" height="24" viewBox="0 0 24 24">
    <circle cx="12" cy="12" r="12" fill="#0f7fc9" /><path d="M24 12c0-7-5-12-12-12C6 0 2 4 1 8c2-3 6-4 10-3 5 1 8 5 6 9-1 2 7 3 7-2z" fill="#3ecf8e" />
    <path d="M7 14c0 4 4 7 8 7 3 0 7-1 8-4-3 2-8 2-10 0-1-1-1-2 0-3-2-1-5-2-6 0z" fill="#1a3c78" />
  </Svg>
);
const VpnI = () => <Svg width="24" height="24" viewBox="0 0 24 24"><circle cx="12" cy="12" r="11.500" fill="#f39a1d" /><path d="M12 .5A11.500 11.500 0 0 1 23.500 12 11.500 11.500 0 0 1 12 23.500z" fill="#7b4fbe" /><path d="M23 10a11.500 11.500 0 0 1-11 13.500c6 0 8-7 11-13.500z" fill="#f4d03f" /><circle cx="12" cy="12" r="7" fill="#fff" /><circle cx="12" cy="11" r="2" fill="#333" /><path d="M11 12h2v4h-2z" fill="#333" /></Svg>;
const AzureI = () => (
  <Svg width="25" height="24" viewBox="0 0 25 24">
    <path d="M10 7a4 4 0 0 1 8-1 4 4 0 0 1 6 4H10z" fill="#7fcdf5" />
    <ellipse cx="7" cy="8" rx="7" ry="3" fill="#3fa9e0" /><path d="M0 8v13c0 3 14 3 14 0V8c0 3-14 3-14 0z" fill="#1a72b8" />
    <path d="M1 15h3l2-4 2 6 2-2h4" fill="none" stroke="#fff" />
    <circle cx="18" cy="18" r="5" fill="#3fa9e0" /><circle cx="18" cy="18" r="2" fill="#1e1c1a" />
  </Svg>
);
const ToolI = () => (
  <Svg width="22" height="22" viewBox="0 0 22 22">
    <path d="M0 5v-3h5M17 0h5v5M22 17v5h-5M5 22H0v-5" fill="none" stroke="#3c9e3c" strokeWidth="1.5" />
    <path d="M3 3h9v12H3z" fill="#e8b93a" /><ellipse cx="7.500" cy="3" rx="4.500" ry="2" fill="#f6dc77" />
    <path d="M9 19l10-10M10 9l10 10" stroke="#2f8fdc" strokeWidth="2.4" />
  </Svg>
);
const PyI = () => (
  <Svg width="24" height="24" viewBox="0 0 24 24">
    <rect width="20" height="19" fill="#e8eef6" /><rect width="20" height="3" fill="#3b7fc4" />
    <path d="M3 6h8M3 9h5M3 12h5" stroke="#8898aa" />
    <path d="M11 8a4 4 0 0 1 8 0v3h-5v1h-4" fill="#3776ab" />
    <path d="M20 11a4 4 0 0 1 0 8v2a3 3 0 0 1-7 0v-3h5v-1h-5v-2z" fill="#ffd43b" />
  </Svg>
);
const AtomI = () => (
  <Svg width="24" height="24" viewBox="0 0 24 24"><circle cx="12" cy="12" r="12" fill="#45a866" /><circle cx="12" cy="12" r="2" fill="#e8f5e8" />
    <g fill="none" stroke="#e8f5e8" strokeWidth="1"><ellipse cx="12" cy="12" rx="4" ry="9" /><ellipse cx="12" cy="12" rx="4" ry="9" transform="rotate(60 12 12)" /><ellipse cx="12" cy="12" rx="4" ry="9" transform="rotate(120 12 12)" /></g></Svg>
);
const DiscordI = () => (
  <Svg width="24" height="24" viewBox="0 0 24 24"><circle cx="12" cy="12" r="12" fill="#5865f2" /><path d="M6 8c4-2 8-2 12 0l1.500 7c-1 1-2.500 2-4 2l-1-1.500h-5L8.500 17c-1.500 0-3-1-4-2z" fill="#fff" /><circle cx="9.500" cy="12" r="1.500" fill="#5865f2" /><circle cx="14.500" cy="12" r="1.500" fill="#5865f2" /></Svg>
);
const TeamsI = () => (
  <Svg width="24" height="24" viewBox="0 0 24 24"><circle cx="14" cy="3.500" r="3" fill="#7b83eb" /><circle cx="20.500" cy="5.500" r="2.500" fill="#5059c9" /><path d="M9 7h10v11a5 5 0 0 1-10 0z" fill="#7b83eb" /><rect y="5" width="12" height="12" rx="1" fill="#4b53bc" /><path d="M3 8h6M6 8v7" stroke="#fff" strokeWidth="1.600" /><circle cx="19" cy="19" r="4.500" fill="#6bb700" /><path d="M17 19l1.500 1.500 2.500-3" stroke="#fff" fill="none" /></Svg>
);
const ChromeI = () => (
  <Svg width="23" height="23" viewBox="0 0 24 24"><circle cx="12" cy="12" r="12" fill="#ea4335" /><path d="M12 12L1.600 18A12 12 0 0 1 1.600 6z" fill="#34a853" /><path d="M12 12l-10.400 6A12 12 0 0 0 22 18.500z" fill="#34a853" /><path d="M12 12h12a12 12 0 0 1-12 12l-3-3z" fill="#fbbc04" /><circle cx="12" cy="12" r="5.500" fill="#fff" /><circle cx="12" cy="12" r="4.300" fill="#4285f4" /></Svg>
);
const FolderI = () => <Svg width="23" height="20" viewBox="0 0 23 20"><path d="M0 1h8l2 2h13v16H0z" fill="#f5c542" /><path d="M0 6h23v13H0z" fill="#ffdb70" /><path d="M8 19v-6h7v6z" fill="#3a9bdc" /><path d="M6 13h11v2H6z" fill="#d6a92a" /></Svg>;
const ExcelI = () => (
  <Svg width="24" height="22" viewBox="0 0 24 22"><rect x="6" width="18" height="22" rx="1" fill="#21a366" /><rect x="15" y="11" width="9" height="11" fill="#107c41" /><rect x="6" y="6" width="9" height="5" fill="#33c481" /><rect y="4" width="13" height="14" rx="1" fill="#107c41" /><path d="M3 7l7 8M10 7l-7 8" stroke="#fff" strokeWidth="1.800" /></Svg>
);
const WeatherI = () => <Svg width="23" height="23" viewBox="0 0 23 23"><circle cx="10.500" cy="10.500" r="10.500" fill="#f7a81b" /><path d="M10.500 21A10.500 10.500 0 0 0 21 10.500h-6L8 18z" fill="#ee7c14" /><path d="M8 17a3 3 0 0 1 3-4 4 4 0 0 1 7-1 3 3 0 0 1 4 5z" fill="#dbe7f3" /></Svg>;
const TrayChev = () => <Svg width="12" height="7" viewBox="0 0 12 7" fill="none" stroke="#fff" strokeWidth="1.200"><path d="M.5 6.500L6 1l5.500 5.500" /></Svg>;
const BattI = () => <Svg width="16" height="12" viewBox="0 0 16 12" fill="none" stroke="#fff"><path d="M5.500 3.500H15v6H5.500z" /><rect x="7" y="5" width="6.500" height="3" fill="#fff" stroke="none" /><path d="M1 1v3M3 1v3M0 4h4v2c0 1-1 2-2 2v3" /></Svg>;
const WifiI = () => <Svg width="13" height="12" viewBox="0 0 13 12" fill="none" stroke="#999"><path d="M.5 5.500A9 9 0 0 1 12 2M2.500 8A6 6 0 0 1 9 5M5 10a3 3 0 0 1 3-2" /><rect x="9" y="8" width="3" height="3" fill="#ddd" stroke="none" /></Svg>;
const SoundI = () => <Svg width="15" height="14" viewBox="0 0 15 14" fill="none" stroke="#fff"><path d="M.5 4.500h3L7 1v12L3.500 9.500h-3zM9.500 5a3 3 0 0 1 0 4M11.500 3a6 6 0 0 1 0 8" /></Svg>;
const NotifI = () => <Svg width="16" height="15" viewBox="0 0 16 15" fill="#fff"><path d="M0 0h16v11H8l-3 4v-4H0z" /><path d="M3 3h10M3 6h10M3 8.500h6" stroke="#1e1c1a" /></Svg>;

const cols = [["A",120],["B",119],["C",126],["D",126],["E",132],["F",65],["G",64],["H",64],["I",64],["J",64],["K",64],["L",64],["M",64],["N",64],["O",64]];
const rows = Array.from({ length: 23 }, (_, i) => i + 2);
const tabsTop = [["File",51],["Home",65,1],["Insert",63],["Page Layout",101],["Formulas",82],["Data",56],["Review",68],["View",55],["Help",57],["Power Pivot",100]];
const hbars = [
  { label: "US", w: 282, c: "#375623", value: "29,252,214,076", pl: 31 },
  { label: "United Kingdom", w: 58, c: "#7f7f7f", value: "6,059,192,859", pl: 11 },
  { label: "India", w: 173, c: "#548235", value: "17,919,614,572", pl: 23 },
  { label: "", w: 65, c: "#a9d18e", value: "", pl: 0 },
];
const PX = 0.02453;
const columns = [
  { v: "2,100", n: 2300, c: "#a9d18e" },
  { v: "3,687", n: 3687, c: "#548235" },
  { v: "7,397", n: 7397, c: "#375623" },
];

function SlicerBox({ x, y, w, h, name, items, bodyH, mt, scroll }) {
  return (
    <Slicer $x={x} $y={y} $w={w} $h={h}>
      <SlicerHead>
        <SlicerName>{name}</SlicerName>
        <MultiI /><Sp $ml={13}><ClearI /></Sp>
      </SlicerHead>
      <SlicerBody $h={bodyH} $mt={mt}>
        <SlicerItems>{items.map((t, i) => <SlicerItem key={i}>{t}</SlicerItem>)}</SlicerItems>
        {scroll && (
          <SlicerBar>
            <BarWrap><ChevUp /><SlicerThumb /><ChevDown /></BarWrap>
          </SlicerBar>
        )}
      </SlicerBody>
    </Slicer>
  );
}

export default function App() {
  return (
    <Page>
      <Global />
      <TitleBar>
        <FixedText $w={57}>AutoSave</FixedText>
        <Toggle>Off</Toggle>
        <Sp $ml={13}><SaveI /></Sp>
        <Sp $ml={13}><UndoI /></Sp><Sp $ml={5}><Chev c="#fff" w={7} /></Sp>
        <Sp $ml={13}><RedoI /></Sp><Sp $ml={5}><Chev c="#4f9a73" w={7} /></Sp>
        <Sp $ml={15}><CustomI /></Sp>
        <FixedText $w={134} $ml={60} $ls={-0.37}>Covid19_Dataset • Saved</FixedText>
        <Sp><Caret c="#fff" /></Sp>
        <SearchBox><SearchI /><span>Search (Alt+Q)</span></SearchBox>
        <FixedText $w={100} $ml={115}>Abiola B Dunmoye</FixedText>
        <Avatar>AB</Avatar>
        <Sp $ml={28}><PenI /></Sp>
        <Sp $ml={29}><RibbonModeI /></Sp>
        <Sp $ml={34}><WinMin /></Sp>
        <Sp $ml={35}><WinMax /></Sp>
        <Sp $ml={36}><WinX /></Sp>
      </TitleBar>

      <TabRow>
        {tabsTop.map(([t, w, a]) => <RTab key={t} $w={w} $active={a}>{t}</RTab>)}
        <RTab $w={90} $shape>Shape Format</RTab>
        <TabActions>
          <ActionBtn $w={98}><CommentI />Comments</ActionBtn>
          <ActionBtn $w={66}><ShareI />Share</ActionBtn>
        </TabActions>
      </TabRow>

      <Ribbon>
        <Group $w={96}>
          <GroupBody>
            <BigTool $w={42} $ml={8}>
              <BigIcon><PasteI /></BigIcon>
              <TextLine>Paste</TextLine>
              <TextLine><Chev /></TextLine>
            </BigTool>
            <StackRows $ml={3}>
              <StackRow><Slot $w={18}><ScissorsI /></Slot></StackRow>
              <StackRow><Slot $w={18}><CopyI /></Slot><Slot $w={14}><Chev /></Slot></StackRow>
              <StackRow><Slot $w={18}><BrushI /></Slot></StackRow>
            </StackRows>
          </GroupBody>
          <GroupLabel $launch>Clipboard</GroupLabel>
          <Launcher><Launch /></Launcher>
        </Group>

        <Group $w={231}>
          <GroupBody $pl={8}>
            <Rows>
              <Row>
                <Combo $w={123}>Calibri (Body)<Chev c="#333" /></Combo>
                <Combo $w={43} $ml={2}>36<Chev c="#333" /></Combo>
                <Slot $w={20} $ml={5}><BigA up /></Slot>
                <Slot $w={20} $ml={5}><BigA /></Slot>
              </Row>
              <Row>
                <Slot $w={22} $on><b>B</b></Slot>
                <Slot $w={22} $ml={2}><i>I</i></Slot>
                <Slot $w={22} $ml={2}><u>U</u></Slot>
                <Slot $w={12}><Chev /></Slot>
                <VSep $m={6} />
                <Slot $w={19}><GridDots /></Slot>
                <Slot $w={16}><Chev /></Slot>
                <VSep $m={5} />
                <Slot $w={20}><FillI /></Slot>
                <Slot $w={14}><Chev /></Slot>
                <Slot $w={20} $ml={5}><FontColI /></Slot>
                <Slot $w={14}><Chev /></Slot>
              </Row>
            </Rows>
          </GroupBody>
          <GroupLabel $launch>Font</GroupLabel>
          <Launcher><Launch /></Launcher>
        </Group>

        <Group $w={280}>
          <GroupBody $pl={9}>
            <Rows>
              <Row>
                <Slot $w={22} $on><AlignI t="vtop" /></Slot>
                <Slot $w={22} $ml={1}><AlignI t="vmid" /></Slot>
                <Slot $w={22} $ml={3}><AlignI t="vbot" /></Slot>
                <VSep $m={4} />
                <Slot $w={20}><OrientI /></Slot>
                <Slot $w={12}><Chev /></Slot>
                <VSep $m={18} $r={9} />
                <WrapI /><DimText $ml={3}>Wrap Text</DimText>
              </Row>
              <Row>
                <Slot $w={22}><AlignI t="left" /></Slot>
                <Slot $w={22} $ml={2} $on><AlignI t="center" /></Slot>
                <Slot $w={22} $ml={2}><AlignI t="right" /></Slot>
                <VSep $m={4} />
                <Slot $w={22}><Outdent c="#aaa" a="M6 6H1M3 4L1 6l2 2" /></Slot>
                <Slot $w={22} $ml={2}><Outdent c="#444" a="M1 6h6M5 4l2 2-2 2" /></Slot>
                <VSep $m={4} />
                <Slot $w={18}><MergeI /></Slot>
                <DimText $ml={4}>Merge &amp; Center</DimText>
                <Slot $w={24} $ml={1}><Chev dim /></Slot>
              </Row>
            </Rows>
          </GroupBody>
          <GroupLabel $launch>Alignment</GroupLabel>
          <Launcher><Launch /></Launcher>
        </Group>

        <Group $w={156}>
          <GroupBody $pl={9}>
            <Rows>
              <Row><Combo $w={140} $dim>General<Chev dim /></Combo></Row>
              <Row>
                <Slot $w={22}><AcctI /></Slot>
                <Slot $w={12} $ml={1}><Chev dim /></Slot>
                <Slot $w={23} $ml={2}><PercentGlyph>%</PercentGlyph></Slot>
                <Slot $w={15} $ml={3}><CommaI /></Slot>
                <VSep $m={5} />
                <Slot $w={18} $ml={2}><Decimal a=".0" b=".00" /></Slot>
                <Slot $w={18} $ml={6}><Decimal a=".00" b=".0" flip /></Slot>
              </Row>
            </Rows>
          </GroupBody>
          <GroupLabel $launch>Number</GroupLabel>
          <Launcher><Launch /></Launcher>
        </Group>

        <Group $w={194}>
          <GroupBody $pl={6}>
            <BigTool $w={80} $dim>
              <BigIcon><CondI /></BigIcon>
              <TextLine>Conditional</TextLine>
              <TextLine>Formatting<Chev dim w={7} /></TextLine>
            </BigTool>
            <BigTool $w={52} $dim>
              <BigIcon><TableI /></BigIcon>
              <TextLine>Format as</TextLine>
              <TextLine>Table<Chev dim w={7} /></TextLine>
            </BigTool>
            <BigTool $w={52} $dim>
              <BigIcon><TableI /></BigIcon>
              <TextLine>Cell</TextLine>
              <TextLine>Styles<Chev dim w={7} /></TextLine>
            </BigTool>
          </GroupBody>
          <GroupLabel>Styles</GroupLabel>
        </Group>

        <Group $w={94}>
          <GroupBody $pl={12}>
            <StackRows>
              <StackRow $dim><CellSideI k="ins" /><Sp $ml={3}>Insert</Sp><Sp $ml={7}><Chev /></Sp></StackRow>
              <StackRow $dim><CellSideI k="del" /><Sp $ml={3}>Delete</Sp><Sp $ml={8}><Chev /></Sp></StackRow>
              <StackRow><FormatI /><Sp $ml={3}>Format</Sp><Sp $ml={1}><Chev /></Sp></StackRow>
            </StackRows>
          </GroupBody>
          <GroupLabel>Cells</GroupLabel>
        </Group>

        <Group $w={143}>
          <GroupBody $pl={13}>
            <StackRows>
              <StackRow><SigmaI /><Sp $ml={7}><Chev dim /></Sp></StackRow>
              <StackRow><FillDownI /><Sp $ml={5}><Chev dim /></Sp></StackRow>
              <StackRow><EraseI /><Sp $ml={5}><Chev /></Sp></StackRow>
            </StackRows>
            <BigTool $w={44} $ml={6} $dim>
              <BigIcon><SortI /></BigIcon>
              <TextLine>Sort &amp;</TextLine>
              <TextLine>Filter<Chev dim w={7} /></TextLine>
            </BigTool>
            <BigTool $w={44}>
              <BigIcon><FindI /></BigIcon>
              <TextLine>Find &amp;</TextLine>
              <TextLine>Select<Chev w={7} /></TextLine>
            </BigTool>
          </GroupBody>
          <GroupLabel>Editing</GroupLabel>
        </Group>

        <Group $w={62}>
          <GroupBody>
            <BigTool $w={62} $dim>
              <BigIcon><AnalyzeI /></BigIcon>
              <TextLine>Analyze</TextLine>
              <TextLine>Data</TextLine>
            </BigTool>
          </GroupBody>
          <GroupLabel>Analysis</GroupLabel>
        </Group>

        <Group $w={74}>
          <GroupBody>
            <BigTool $w={74}>
              <BigIcon><SensI /></BigIcon>
              <TextLine>Sensitivity</TextLine>
              <TextLine><Chev /></TextLine>
            </BigTool>
          </GroupBody>
          <GroupLabel>Sensitivity</GroupLabel>
        </Group>
        <Collapse><Svg width="11" height="6" viewBox="0 0 11 6" fill="none" stroke="#444"><path d="M.5 5.500l5-5 5 5" /></Svg></Collapse>
      </Ribbon>

      <FormulaArea>
        <NameBox>TextBox 5<Caret /></NameBox>
        <GripDots><VDots /></GripDots>
        <FxBox>
          <Svg width="11" height="11" viewBox="0 0 11 11" stroke="#bbb" strokeWidth="1.500"><path d="M1 1l9 9M10 1l-9 9" /></Svg>
          <Svg width="12" height="11" viewBox="0 0 12 11" fill="none" stroke="#bbb" strokeWidth="2"><path d="M1 6l3.500 4L11 1" /></Svg>
          <FxText>fx</FxText>
        </FxBox>
        <FormulaInput><ChevDown /></FormulaInput>
      </FormulaArea>

      <SheetArea>
        <SheetMain>
          <ColHeaders>
            <Corner><TriangleCorner /></Corner>
            {cols.map(([c, w]) => <ColHead key={c} $w={w}>{c}</ColHead>)}
          </ColHeaders>
          <SheetBody>
            <RowHeads>{rows.map(r => <RowHead key={r}>{r}</RowHead>)}</RowHeads>
            <Canvas>
              <BarChart>
                {[124, 220, 316, 413, 509].map(x => <GridLine key={x} $x={x} />)}
                {hbars.map(b => (
                  <BarRow key={b.label || "more"}>
                    <BarLabel>{b.label}</BarLabel>
                    <HBar $c={b.c} style={{ width: b.w }}><HBarValue $pl={b.pl}>{b.value}</HBarValue></HBar>
                  </BarRow>
                ))}
              </BarChart>
              <ColChart>
                {columns.map(c => (
                  <ColItem key={c.v}>
                    <ColValue>{c.v}</ColValue>
                    <ColBar $c={c.c} style={{ height: Math.round(c.n * PX) + 8 }} />
                  </ColItem>
                ))}
              </ColChart>

              <Banner />
              <TitleBox>COVID19 DASHBOARD</TitleBox>
              <TextSeam />
              <SubTitle>Jan 2020 - June 2022</SubTitle>

              <Kpi $x={32} $y={318} $w={189} $h={105} $bg="#548235">
                <KpiTitle $t={19}>Confirmed Cases</KpiTitle>
                <KpiValue $t={46} $dx={1}>158,411,779,289</KpiValue>
              </Kpi>
              <Kpi $x={229} $y={327} $w={188} $h={91} $bg="#7f7f7f">
                <KpiTitle $t={13} $dx={-4}>Death Cases</KpiTitle>
                <KpiValue $t={41} $dx={1}>2,735,069,228</KpiValue>
              </Kpi>
              <Kpi $x={424} $y={321} $w={175} $h={102} $bg="#548235">
                <KpiTitle $t={19} $dx={-3}>Rate</KpiTitle>
                <KpiValue $t={42} $dx={1}>1.73%</KpiValue>
              </Kpi>

              <SlicerBox x={611} y={320} w={161} h={127} name="Year" items={["2020","2021","2022"]} bodyH={90} mt={5} />
              <SlicerBox x={784} y={320} w={166} h={131} name="Month" items={["Jan","Feb","Mar",""]} bodyH={90} mt={5} scroll />
              <SlicerBox x={965} y={322} w={159} h={132} name="Day" items={["01","02","03",""]} bodyH={92} mt={4} scroll />

              <Heading $x={47} $y={464} $w={400} $fs={15.7} $ls={.1} $c="#375623">Top 5 Countries with Highest Prevelence Of Covid19</Heading>
              <Heading $x={47} $y={486} $w={480} $fs={14.7} $ls={.05} $c="#548235">United States has the Highest Prevelence (Confirmed Cases) of Covid19</Heading>
              <Heading $x={47} $y={506} $w={470} $fs={14.7} $ls={.05} $c="#548235" $ta="center">Infection and that contributed 29,252,214,076.</Heading>
              <Heading $x={634} $y={469} $w={430} $fs={15.75} $ls={.1} $c="#375623">Bottom 5 Countries with the Lowest Prevelence Of Covid19</Heading>
              <Heading $x={633} $y={493} $w={410} $fs={14.8} $ls={.05} $c="#548235">North Korea has the Lowest Prevelence (Confirmed Cases) of</Heading>
              <Heading $x={633} $y={513} $w={403} $fs={14.8} $ls={.05} $c="#548235" $ta="center">Covid19 Infection and that contributed 48.</Heading>

              <DotH /><DotV />
              {[[141,252],[141,283],[465,283],[789,252],[789,283],[583,345],[1141,275],[1141,345],[26,275],[26,345]].map(([x, y]) => <Handle key={`${x}-${y}`} $x={x} $y={y} />)}
            </Canvas>
          </SheetBody>
        </SheetMain>
        <Gutter>
          <GutterRule />
          <VScroll>
            <VBtn><UpTri /></VBtn>
            <VThumb />
            <VBtn><DownTri /></VBtn>
          </VScroll>
        </Gutter>
      </SheetArea>

      <TabBar>
        <NavArrows><LeftTri c="#bbb" /><RightTri c="#bbb" /></NavArrows>
        <SheetTab $w={65} $noline>Sheet2</SheetTab>
        <SheetTab $w={92} $active>Dashboard</SheetTab>
        <SheetTab $w={136}>CompletedDataset</SheetTab>
        <SheetTab $w={88}>Recovered</SheetTab>
        <SheetTab $w={61}>Death</SheetTab>
        <SheetTab $w={89}>Confirmed</SheetTab>
        <SheetTab $w={64}>Sheet1</SheetTab>
        <AddSheet><PlusCircle /></AddSheet>
        <TabDots><VDots /></TabDots>
        <HScroll>
          <HBtn><LeftTri /></HBtn>
          <HThumb />
          <HBtn><RightTri /></HBtn>
        </HScroll>
      </TabBar>

      <StatusBar>
        Ready
        <StatusItem $ml={22}><DocTag />General\All Employees (unrestricted)</StatusItem>
        <StatusItem $ml={20}><AccessI />Accessibility: Investigate</StatusItem>
        <Zoom>
          <ViewBtn $on><NormalI /></ViewBtn>
          <ViewBtn><LayoutI /></ViewBtn>
          <ViewBtn><BreakI /></ViewBtn>
          <Sp $ml={6}><Svg width="8" height="2" viewBox="0 0 8 2"><path d="M0 1h8" stroke="#555" /></Svg></Sp>
          <ZoomTrack />
          <Svg width="9" height="9" viewBox="0 0 9 9" stroke="#555"><path d="M0 4.500h9M4.500 0v9" /></Svg>
          <ZoomPct>100%</ZoomPct>
        </Zoom>
      </StatusBar>

      <Taskbar>
        <StartBtn><WinLogo /></StartBtn>
        <TaskSearch>
          <SearchI c="#222" s={16} />
          <span>Type here to search</span>
          <SearchArt><CityArt /></SearchArt>
        </TaskSearch>
        <Apps>
          <AppSlot><CortanaI /></AppSlot>
          <AppSlot $w={48}><StoreI /></AppSlot>
          <AppSlot $w={44}><MailI /><Badge $r={3} $b={3}>41</Badge></AppSlot>
          <AppSlot><EdgeI /></AppSlot>
          <AppSlot><VpnI /></AppSlot>
          <AppSlot><AzureI /></AppSlot>
          <AppSlot $w={45}><ToolI /></AppSlot>
          <AppSlot><PyI /></AppSlot>
          <AppSlot><AtomI /></AppSlot>
          <AppSlot><DiscordI /><Badge $r={4} $b={4} $bg="#e8413c">9+</Badge></AppSlot>
          <AppSlot><TeamsI /></AppSlot>
          <AppSlot><ChromeI /></AppSlot>
          <AppSlot><FolderI /></AppSlot>
          <AppSlot $w={42} $on><ExcelI /></AppSlot>
        </Apps>
        <Tray>
          <TrayItem><WeatherI /></TrayItem>
          <TrayItem $ml={9}>78°F</TrayItem>
          <TrayItem $ml={18}><TrayChev /></TrayItem>
          <TrayItem $ml={10}><BattI /></TrayItem>
          <TrayItem $ml={11}><WifiI /></TrayItem>
          <TrayItem $ml={9}><SoundI /></TrayItem>
          <TrayItem $ml={11}>ENG</TrayItem>
          <Clock>10:27 AM<br />08/07/2022</Clock>
          <TrayItem $ml={7}><NotifI /><Badge $r={-8} $b={-9}>6</Badge></TrayItem>
        </Tray>
      </Taskbar>
    </Page>
  );
}
